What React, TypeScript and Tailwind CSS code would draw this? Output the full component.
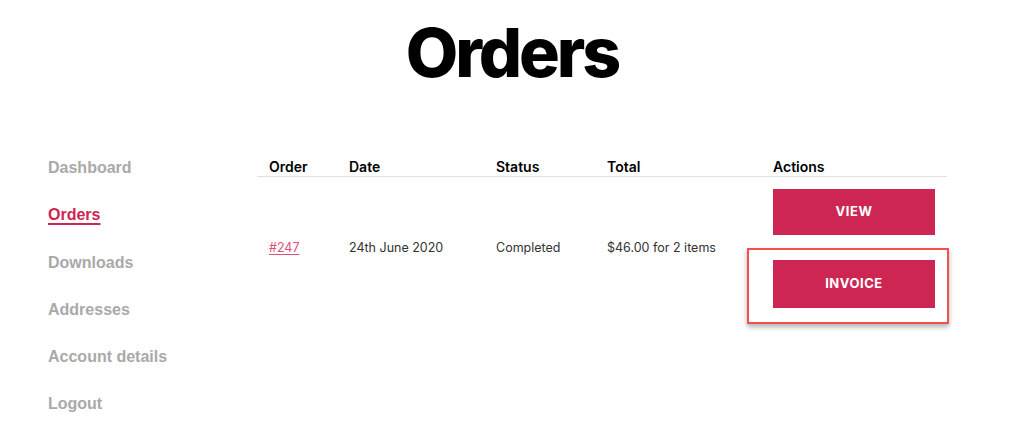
const navItems = ["Dashboard", "Orders", "Downloads", "Addresses", "Account details", "Logout"];

function Sidebar() {
  return (
    <nav className="w-[209px] shrink-0 -mt-px flex flex-col gap-[23.3px] font-['Liberation_Sans',Arial,sans-serif]">
      {navItems.map((item) => (
        <a
          key={item}
          href="#"
          className={
            item === "Orders"
              ? "text-[16px] leading-6 font-bold text-[#cd2653] underline underline-offset-[3px] decoration-2"
              : "text-[16px] leading-6 font-bold text-[#a9a9a9]"
          }
        >
          {item}
        </a>
      ))}
    </nav>
  );
}

function OrdersTable() {
  return (
    <div className="w-[690px] font-['Inter',sans-serif]">
      <div className="grid grid-cols-[80px_147px_111px_166px_186px] border-b border-[#e0e0e0] h-5 text-[14px] leading-5 font-semibold text-black">
        <div className="pl-3">Order</div>
        <div className="pl-3">Date</div>
        <div className="pl-3">Status</div>
        <div className="pl-3">Total</div>
        <div className="pl-3">Actions</div>
      </div>
      <div className="grid grid-cols-[80px_147px_111px_166px_186px] items-center pt-3 text-[12.5px] text-[#333]">
        <div className="pl-3">
          <a href="#" className="text-[#e0507a] underline underline-offset-2">#247</a>
        </div>
        <div className="pl-3">24th June 2020</div>
        <div className="pl-3">Completed</div>
        <div className="pl-3">$46.00 for 2 items</div>
        <div className="pl-3 flex flex-col gap-[25px]">
          <button className="w-[162px] h-[46px] bg-[#cd2653] text-white text-[13px] font-bold tracking-[0.04em]">
            VIEW
          </button>
          <div className="relative w-[162px]">
            <div className="absolute -left-[26px] -top-[12px] -right-[14px] -bottom-[16px] border-2 border-[#f0504f] shadow-[0_3px_5px_rgba(0,0,0,0.3)]" />
            <button className="relative w-[162px] h-[48px] bg-[#cd2653] text-white text-[13px] font-bold tracking-[0.04em]">
              INVOICE
            </button>
          </div>
        </div>
      </div>
    </div>
  );
}

export default function App() {
  return (
    <div className="w-[1024px] h-[436px] bg-white overflow-hidden">
      <h1 className="pt-[18px] text-center text-[68px] leading-none font-extrabold tracking-[-0.045em] text-black font-['Inter',sans-serif]">
        Orders
      </h1>
      <div className="flex mt-[71px] pl-12">
        <Sidebar />
        <OrdersTable />
      </div>
    </div>
  );
}
